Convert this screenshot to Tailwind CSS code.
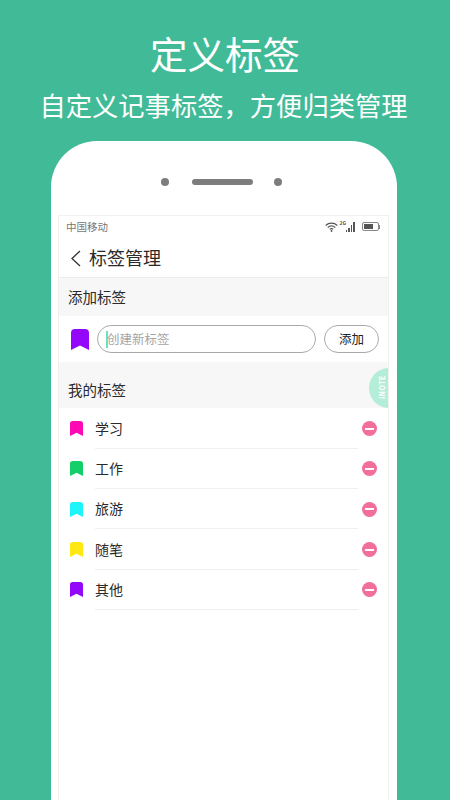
<!DOCTYPE html>
<html lang="zh">
<head>
    <meta charset="UTF-8" />
    <meta name="viewport" content="width=device-width, initial-scale=1.0" />
    <script src="https://cdn.jsdelivr.net/npm/@tailwindcss/browser@4"></script>
    <title>定义标签</title>
</head>
<body class="w-[450px] h-[800px] overflow-hidden bg-[#41bb97] font-['Noto_Sans_CJK_SC','Noto_Sans',sans-serif]">

    <!-- Titulo -->
    <header class="h-[141px] pt-[28px] text-center text-white">
        <h1 class="text-[37.5px] leading-[50px] font-normal">定义标签</h1>
        <p class="mt-[12px] pr-[3px] text-[26.300px] leading-[30px]">自定义记事标签&#xFF0C;方便归类管理</p>
    </header>

    <!-- Telefono -->
    <div class="w-[346px] h-[659px] ml-[51px] bg-white rounded-t-[46px] px-[7px]">
        <div class="h-[74px] pt-[38px] pl-[103px] flex">
            <span class="w-[8px] h-[8px] mt-[-1px] rounded-full bg-[#7d7d7d]"></span>
            <span class="ml-[23px] w-[61px] h-[6px] rounded-full bg-[#7d7d7d]"></span>
            <span class="ml-[21px] w-[8px] h-[8px] mt-[-1px] rounded-full bg-[#7d7d7d]"></span>
        </div>

        <div class="w-[331px] h-[585px] border-x border-t border-[#f0f0f0] text-[#333]">
            <!-- Barra de estado -->
            <div class="h-[23px] pl-[7px] pr-[8px] flex items-center justify-between">
                <span class="text-[10.5px] text-[#777] mt-[-1px]">中国移动</span>
                <div class="flex items-center gap-[2px] mt-[-2px]">
                    <svg width="13" height="10" viewBox="0 0 13 10" fill="none" stroke="#555" stroke-width="1.2">
                        <path d="M.7 3.500C4 .4 9 .4 12.300 3.500M2.700 5.500c2.200-1.900 5.400-1.900 7.600 0M4.700 7.300c1.100-.8 2.500-.8 3.600 0"/>
                        <circle cx="6.500" cy="9" r=".9" fill="#555" stroke="none"/>
                    </svg>
                    <div class="flex items-end gap-[1px] h-[11px] relative w-[17px]">
                        <span class="absolute top-[-1px] left-[0px] text-[5px] leading-[5px] font-bold text-[#555]">2G</span>
                        <span class="ml-[6px] w-[1.5px] h-[2px] bg-[#555]"></span>
                        <span class="w-[1.5px] h-[4px] bg-[#555]"></span>
                        <span class="w-[1.5px] h-[7px] bg-[#555]"></span>
                        <span class="w-[1.5px] h-[10px] bg-[#555]"></span>
                    </div>
                    <div class="ml-[3px] flex items-center">
                        <div class="w-[17px] h-[9px] border border-[#888] rounded-[2px] p-[1px]">
                            <div class="w-[9px] h-full bg-[#555]"></div>
                        </div>
                        <span class="w-[1.5px] h-[4px] bg-[#888]"></span>
                    </div>
                </div>
            </div>

            <!-- Navegacion -->
            <div class="h-[39px] pl-[11px] flex items-center gap-[7px] border-b border-[#ececec]">
                <svg width="12" height="17" viewBox="0 0 12 17" fill="none" stroke="#333" stroke-width="1.3">
                    <path d="M10 1 2 8.500l8 7.500"/>
                </svg>
                <span class="text-[18px] text-[#2a2a2a] mt-[-1px]">标签管理</span>
            </div>

            <!-- Agregar -->
            <div class="h-[38px] pl-[9px] flex items-center bg-[#f7f7f7] text-[14.500px] text-[#2a2a2a]">添加标签</div>
            <div class="h-[46px] pl-[12px] pr-[9px] flex items-center">
                <svg width="18" height="21" viewBox="0 0 18 21" class="shrink-0">
                    <path d="M0 4a4 4 0 0 1 4-4h10a4 4 0 0 1 4 4v17l-9-4.500-9 4.500z" fill="#9307fa"/>
                </svg>
                <div class="ml-[8px] w-[219px] h-[28px] border-[1.5px] border-[#aaa] rounded-full flex items-center pl-[8px]">
                    <span class="w-[2px] h-[17px] bg-[#6fe0bd]"></span>
                    <span class="text-[12.500px] text-[#a5a5a5] ml-[-1px]">创建新标签</span>
                </div>
                <div class="ml-[8px] w-[55px] h-[28px] border-[1.5px] border-[#aaa] rounded-full flex items-center justify-center text-[12.500px] text-[#222]">添加</div>
            </div>

            <!-- Mis etiquetas -->
            <div class="relative h-[46px] pl-[9px] pt-[9px] flex items-center bg-[#f7f7f7] text-[14.500px] text-[#2a2a2a] overflow-hidden">
                我的标签
                <div class="absolute left-[310px] top-[6px] w-[40px] h-[40px] rounded-full bg-[#b5eed8]">
                    <span class="absolute left-[1px] top-[14px] -rotate-90 text-[7px] leading-[10px] font-bold text-white tracking-[0.5px]">iNOTE</span>
                </div>
            </div>

            <ul class="text-[14px] text-[#2a2a2a] pt-[0.5px]">
                <li class="h-[40.300px] pl-[11px] pr-[10px] flex items-center">
                    <svg width="13" height="15" viewBox="0 0 18 21" preserveAspectRatio="none" class="shrink-0"><path d="M0 4a4 4 0 0 1 4-4h10a4 4 0 0 1 4 4v17l-9-4.500-9 4.500z" fill="#ff09b5"/></svg>
                    <div class="ml-[12px] w-[263px] h-full flex items-center border-b border-[#efefef]">学习</div>
                    <span class="ml-[4px] w-[15px] h-[15px] rounded-full bg-[#f26f9c] flex items-center justify-center"><span class="w-[9px] h-[2px] bg-white"></span></span>
                </li>
                <li class="h-[40.300px] pl-[11px] pr-[10px] flex items-center">
                    <svg width="13" height="15" viewBox="0 0 18 21" preserveAspectRatio="none" class="shrink-0"><path d="M0 4a4 4 0 0 1 4-4h10a4 4 0 0 1 4 4v17l-9-4.500-9 4.500z" fill="#12cf68"/></svg>
                    <div class="ml-[12px] w-[263px] h-full flex items-center border-b border-[#efefef]">工作</div>
                    <span class="ml-[4px] w-[15px] h-[15px] rounded-full bg-[#f26f9c] flex items-center justify-center"><span class="w-[9px] h-[2px] bg-white"></span></span>
                </li>
                <li class="h-[40.300px] pl-[11px] pr-[10px] flex items-center">
                    <svg width="13" height="15" viewBox="0 0 18 21" preserveAspectRatio="none" class="shrink-0"><path d="M0 4a4 4 0 0 1 4-4h10a4 4 0 0 1 4 4v17l-9-4.500-9 4.500z" fill="#1df5fb"/></svg>
                    <div class="ml-[12px] w-[263px] h-full flex items-center border-b border-[#efefef]">旅游</div>
                    <span class="ml-[4px] w-[15px] h-[15px] rounded-full bg-[#f26f9c] flex items-center justify-center"><span class="w-[9px] h-[2px] bg-white"></span></span>
                </li>
                <li class="h-[40.300px] pl-[11px] pr-[10px] flex items-center">
                    <svg width="13" height="15" viewBox="0 0 18 21" preserveAspectRatio="none" class="shrink-0"><path d="M0 4a4 4 0 0 1 4-4h10a4 4 0 0 1 4 4v17l-9-4.500-9 4.500z" fill="#ffe812"/></svg>
                    <div class="ml-[12px] w-[263px] h-full flex items-center border-b border-[#efefef]">随笔</div>
                    <span class="ml-[4px] w-[15px] h-[15px] rounded-full bg-[#f26f9c] flex items-center justify-center"><span class="w-[9px] h-[2px] bg-white"></span></span>
                </li>
                <li class="h-[40.300px] pl-[11px] pr-[10px] flex items-center">
                    <svg width="13" height="15" viewBox="0 0 18 21" preserveAspectRatio="none" class="shrink-0"><path d="M0 4a4 4 0 0 1 4-4h10a4 4 0 0 1 4 4v17l-9-4.500-9 4.500z" fill="#9307fa"/></svg>
                    <div class="ml-[12px] w-[263px] h-full flex items-center border-b border-[#efefef]">其他</div>
                    <span class="ml-[4px] w-[15px] h-[15px] rounded-full bg-[#f26f9c] flex items-center justify-center"><span class="w-[9px] h-[2px] bg-white"></span></span>
                </li>
            </ul>
        </div>
    </div>

</body>
</html>
